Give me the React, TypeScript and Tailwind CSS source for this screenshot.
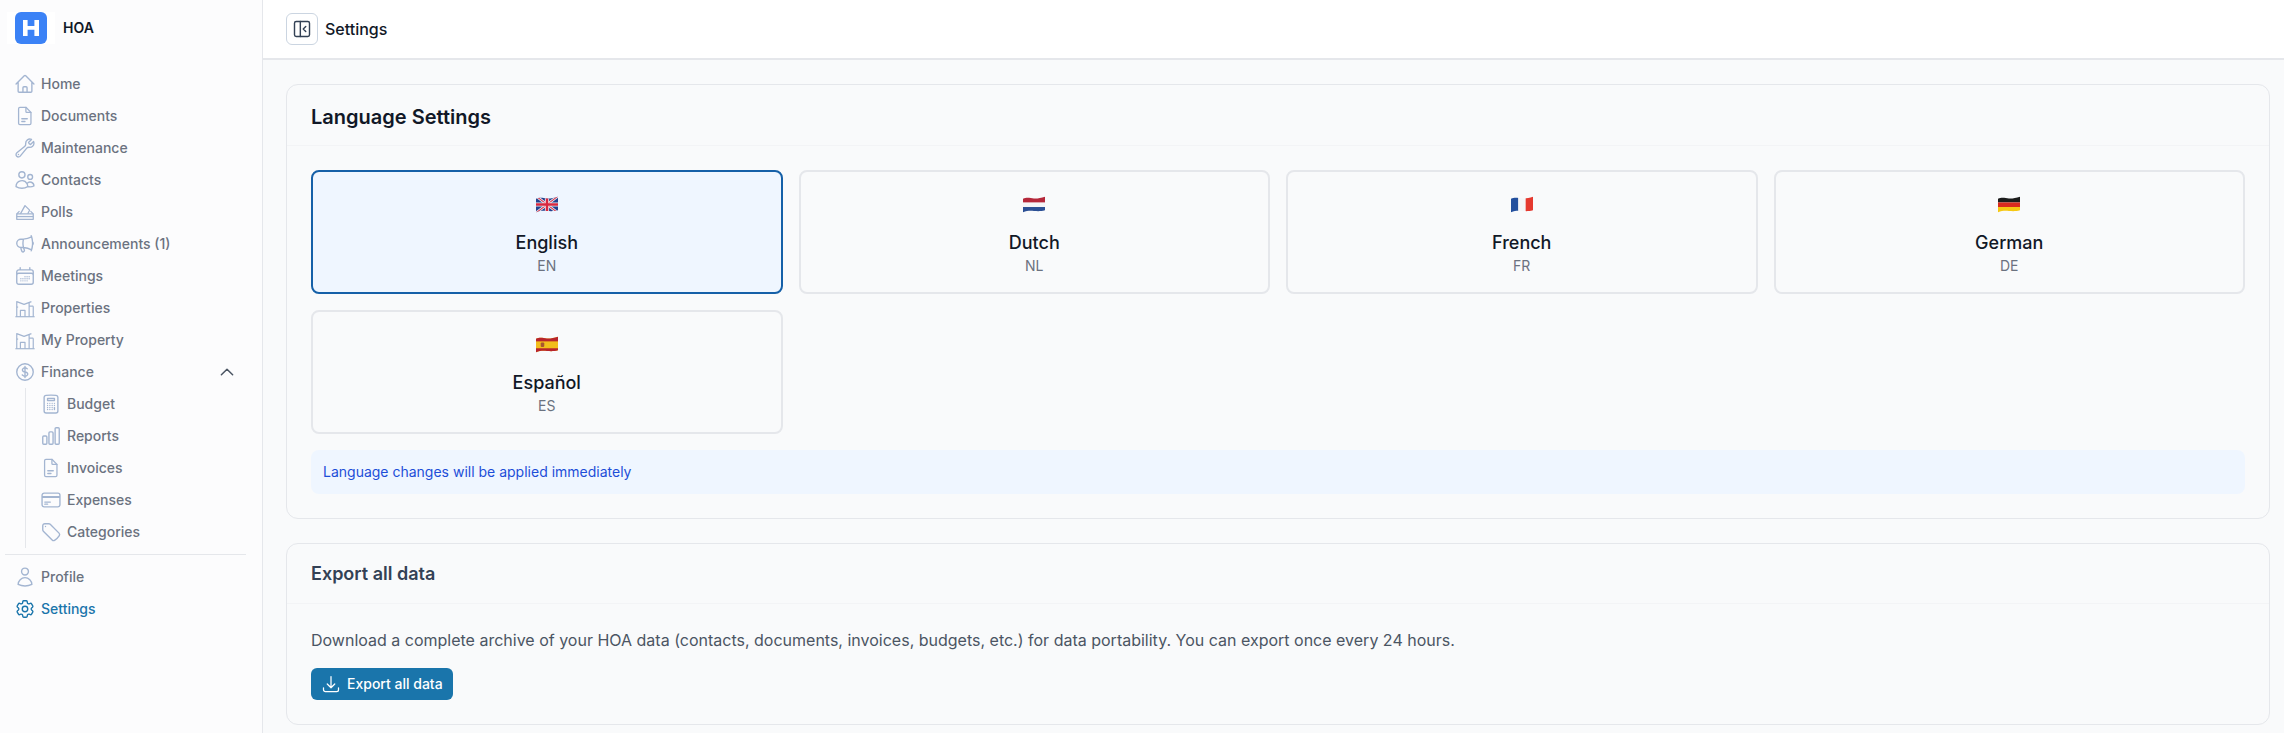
import type { ReactNode } from "react";
import {
  HiOutlineArrowDownTray,
  HiOutlineCalculator,
  HiOutlineCalendarDays,
  HiOutlineChartBar,
  HiOutlineChevronUp,
  HiOutlineCog6Tooth,
  HiOutlineCreditCard,
  HiOutlineCurrencyDollar,
  HiOutlineHome,
  HiOutlineMegaphone,
  HiOutlineTag,
  HiOutlineUser,
  HiOutlineUsers,
  HiOutlineWrench,
} from "react-icons/hi2";

function DocIcon({ className }: { className?: string }) {
  return (
    <svg viewBox="0 0 24 24" fill="none" stroke="currentColor" strokeWidth="1.4" strokeLinecap="round" strokeLinejoin="round" className={className}>
      <path d="M6.5 2.5h6.5l5.5 5.5v12a1.5 1.5 0 0 1-1.5 1.5H6.5A1.5 1.5 0 0 1 5 20V4a1.5 1.5 0 0 1 1.5-1.5z" />
      <path d="M13 2.5V7a1 1 0 0 0 1 1h4.5" />
      <path d="M8.5 15h6M8.5 18h3.5" />
    </svg>
  );
}

function BallotIcon({ className }: { className?: string }) {
  return (
    <svg viewBox="0 0 24 24" fill="none" stroke="currentColor" strokeWidth="1.4" strokeLinejoin="round" className={className}>
      <path d="M3 14h18v6H3z" />
      <path d="M3 14l3-3M21 14l-3-3" />
      <path d="M7 14l5-9 5 5-2 4" />
      <path d="M3 17h18" />
    </svg>
  );
}

function BuildingIcon({ className }: { className?: string }) {
  return (
    <svg viewBox="0 0 24 24" fill="none" stroke="currentColor" strokeWidth="1.3" strokeLinejoin="round" className={className}>
      <path d="M1.5 21.5h21" />
      <path d="M3 21.5V5l8 3 8-3M16.5 6v15.5M21 10h-4.5M21 10v11.5" />
      <path d="M7 21.5v-7h5v7" />
      <path d="M3 11h1.5" />
    </svg>
  );
}

function PanelIcon({ className }: { className?: string }) {
  return (
    <svg viewBox="0 0 24 24" fill="none" stroke="currentColor" strokeWidth="1.7" strokeLinecap="round" strokeLinejoin="round" className={className}>
      <rect x="3" y="3" width="18" height="18" rx="2" />
      <path d="M10 3v18" />
      <path d="M16.5 9l-3 3 3 3" />
    </svg>
  );
}

function FlagFrame({ children }: { children: ReactNode }) {
  return (
    <svg viewBox="0 0 21 16" className="h-[17px] w-[22px]">
      <defs>
        <clipPath id="wave">
          <path d="M0 2.5C4 0.5 7 2 10.5 2.2S17 1.6 21 0.5V13.5C17 14.6 14 14.4 10.5 14.2S4 13.8 0 15.5Z" />
        </clipPath>
      </defs>
      <g clipPath="url(#wave)">{children}</g>
    </svg>
  );
}

const UkFlag = () => (
  <FlagFrame>
    <rect width="21" height="16" fill="#24428f" />
    <path d="M0 0L21 16M21 0L0 16" stroke="#eceef4" strokeWidth="2.6" />
    <path d="M0 0L21 16M21 0L0 16" stroke="#d8354a" strokeWidth="1" />
    <path d="M10.5 0V16M0 8H21" stroke="#eceef4" strokeWidth="4" />
    <path d="M10.5 0V16M0 8H21" stroke="#d8283f" strokeWidth="2.4" />
  </FlagFrame>
);

const NlFlag = () => (
  <FlagFrame>
    <rect width="21" height="6.2" fill="#b5283a" />
    <rect y="6.2" width="21" height="4.2" fill="#f5f5f7" />
    <rect y="10.4" width="21" height="6" fill="#2b4f94" />
  </FlagFrame>
);

const FrFlag = () => (
  <FlagFrame>
    <rect width="7" height="16" fill="#23509e" />
    <rect x="7" width="7" height="16" fill="#f5f5f7" />
    <rect x="14" width="7" height="16" fill="#e5392f" />
  </FlagFrame>
);

const DeFlag = () => (
  <FlagFrame>
    <rect width="21" height="6" fill="#1c1c1c" />
    <rect y="6" width="21" height="4.4" fill="#d92a1f" />
    <rect y="10.4" width="21" height="6" fill="#f6c813" />
  </FlagFrame>
);

const EsFlag = () => (
  <FlagFrame>
    <rect width="21" height="16" fill="#f2bd1b" />
    <rect width="21" height="5" fill="#b8242c" />
    <rect y="11.6" width="21" height="5" fill="#b8242c" />
    <rect x="4.5" y="6" width="3.4" height="4.4" rx="1" fill="#a8552f" />
  </FlagFrame>
);

const languages = [
  { name: "English", code: "EN", flag: <UkFlag />, active: true },
  { name: "Dutch", code: "NL", flag: <NlFlag /> },
  { name: "French", code: "FR", flag: <FrFlag /> },
  { name: "German", code: "DE", flag: <DeFlag /> },
  { name: "Español", code: "ES", flag: <EsFlag /> },
];

const iconClass = "-ml-px h-[22px] w-[22px] shrink-0 text-[#a3b5d1]";

function NavItem({ icon, label, active, children }: { icon: ReactNode; label: string; active?: boolean; children?: ReactNode }) {
  return (
    <a className={`flex h-8 items-center gap-[5px] text-sm font-medium ${active ? "text-[#1a75ab]" : "text-[#6b7280]"}`}>
      {icon}
      <span>{label}</span>
      {children}
    </a>
  );
}

function Sidebar() {
  return (
    <aside className="flex w-[263px] shrink-0 flex-col border-r border-[#e5e7eb] bg-[#fcfcfd] pr-[16px] pl-[5px]">
      <div className="flex h-[68px] items-start pt-3">
        <div className="ml-[2px] flex h-8 w-12 items-center justify-center bg-white">
          <div className="flex h-8 w-8 items-center justify-center rounded-md bg-[#3b82f6]">
            <svg viewBox="0 0 20 20" className="h-[20px] w-[20px]" fill="#fff">
              <path d="M2 2h4.6v6h6.8V2H18v16h-4.6v-6.2H6.6V18H2z" />
            </svg>
          </div>
        </div>
        <span className="ml-2 flex h-8 items-center text-sm font-semibold text-[#111827]">HOA</span>
      </div>
      <nav className="flex flex-col pl-[10px]">
        <NavItem label="Home" icon={<HiOutlineHome className={iconClass} />} />
        <NavItem label="Documents" icon={<DocIcon className={iconClass} />} />
        <NavItem label="Maintenance" icon={<HiOutlineWrench className={iconClass} />} />
        <NavItem label="Contacts" icon={<HiOutlineUsers className={iconClass} />} />
        <NavItem label="Polls" icon={<BallotIcon className={iconClass} />} />
        <NavItem label="Announcements (1)" icon={<HiOutlineMegaphone className={iconClass} />} />
        <NavItem label="Meetings" icon={<HiOutlineCalendarDays className={iconClass} />} />
        <NavItem label="Properties" icon={<BuildingIcon className={iconClass} />} />
        <NavItem label="My Property" icon={<BuildingIcon className={iconClass} />} />
        <NavItem label="Finance" icon={<HiOutlineCurrencyDollar className={iconClass} />}>
          <HiOutlineChevronUp strokeWidth={2} className="mr-[10px] ml-auto h-[18px] w-[18px] text-[#4b5563]" />
        </NavItem>
        <div className="ml-[10px] flex flex-col border-l border-[#e5e7eb] pl-[15px]">
          <NavItem label="Budget" icon={<HiOutlineCalculator className={iconClass} />} />
          <NavItem label="Reports" icon={<HiOutlineChartBar className={iconClass} />} />
          <NavItem label="Invoices" icon={<DocIcon className={iconClass} />} />
          <NavItem label="Expenses" icon={<HiOutlineCreditCard className={iconClass} />} />
          <NavItem label="Categories" icon={<HiOutlineTag className={iconClass} />} />
        </div>
      </nav>
      <div className="my-[6px] border-t border-[#e5e7eb]" />
      <nav className="flex flex-col pl-[10px]">
        <NavItem label="Profile" icon={<HiOutlineUser className={iconClass} />} />
        <NavItem label="Settings" active icon={<HiOutlineCog6Tooth className="-ml-px h-[22px] w-[22px] shrink-0 text-[#1a75ab]" />} />
      </nav>
    </aside>
  );
}

function LanguageCard({ name, code, flag, active }: { name: string; code: string; flag: ReactNode; active?: boolean }) {
  return (
    <button
      className={`flex h-[124px] flex-col items-center rounded-lg border-2 pt-[24px] ${
        active ? "border-[#1560a8] bg-[#eff6ff]" : "border-[#e5e7eb] bg-[#f9fafb]"
      }`}
    >
      {flag}
      <span className="mt-4 text-lg leading-7 font-medium text-[#111827]">{name}</span>
      <span className="-mt-px text-sm leading-5 text-[#6b7280]">{code}</span>
    </button>
  );
}

export default function App() {
  return (
    <div className="flex h-screen w-screen overflow-hidden bg-[#f9fafb] font-[Inter,sans-serif]">
      <Sidebar />
      <main className="flex min-w-0 flex-1 flex-col">
        <header className="flex h-[60px] items-center gap-[7px] border-b-2 border-[#e5e7eb] bg-white pr-6 pl-[23px]">
          <button className="flex h-8 w-8 items-center justify-center rounded-md border border-[#cbd5e1] text-[#334155]">
            <PanelIcon className="h-5 w-5" />
          </button>
          <span className="text-base font-medium text-[#111827]">Settings</span>
        </header>
        <div className="flex flex-col gap-6 pt-6 pr-[14px] pl-[23px]">
          <section className="rounded-xl border border-[#e5e7eb]">
            <div className="flex h-[61px] items-center border-b border-[#f3f4f6] px-6 pt-[3px]">
              <h2 className="text-xl font-semibold text-[#111827]">Language Settings</h2>
            </div>
            <div className="p-6">
              <div className="grid grid-cols-4 gap-4">
                {languages.map((l) => (
                  <LanguageCard key={l.code} {...l} />
                ))}
              </div>
              <div className="mt-4 flex h-[44px] items-center rounded-lg bg-[#eff6ff] px-3 text-sm text-[#1d4ed8]">
                Language changes will be applied immediately
              </div>
            </div>
          </section>
          <section className="rounded-xl border border-[#e5e7eb]">
            <div className="flex h-[60px] items-center border-b border-[#f3f4f6] px-6">
              <h2 className="text-lg font-semibold text-[#334155]">Export all data</h2>
            </div>
            <div className="px-6 pt-6 pb-6">
              <p className="text-base leading-6 text-[#4b5563]">
                Download a complete archive of your HOA data (contacts, documents, invoices, budgets, etc.) for data portability. You can export once every 24 hours.
              </p>
              <button className="mt-4 flex h-8 items-center gap-[6px] rounded-md bg-[#1a75ab] pr-[10px] pl-[10px] text-sm font-medium text-white">
                <HiOutlineArrowDownTray className="h-5 w-5" />
                Export all data
              </button>
            </div>
          </section>
        </div>
      </main>
    </div>
  );
}
